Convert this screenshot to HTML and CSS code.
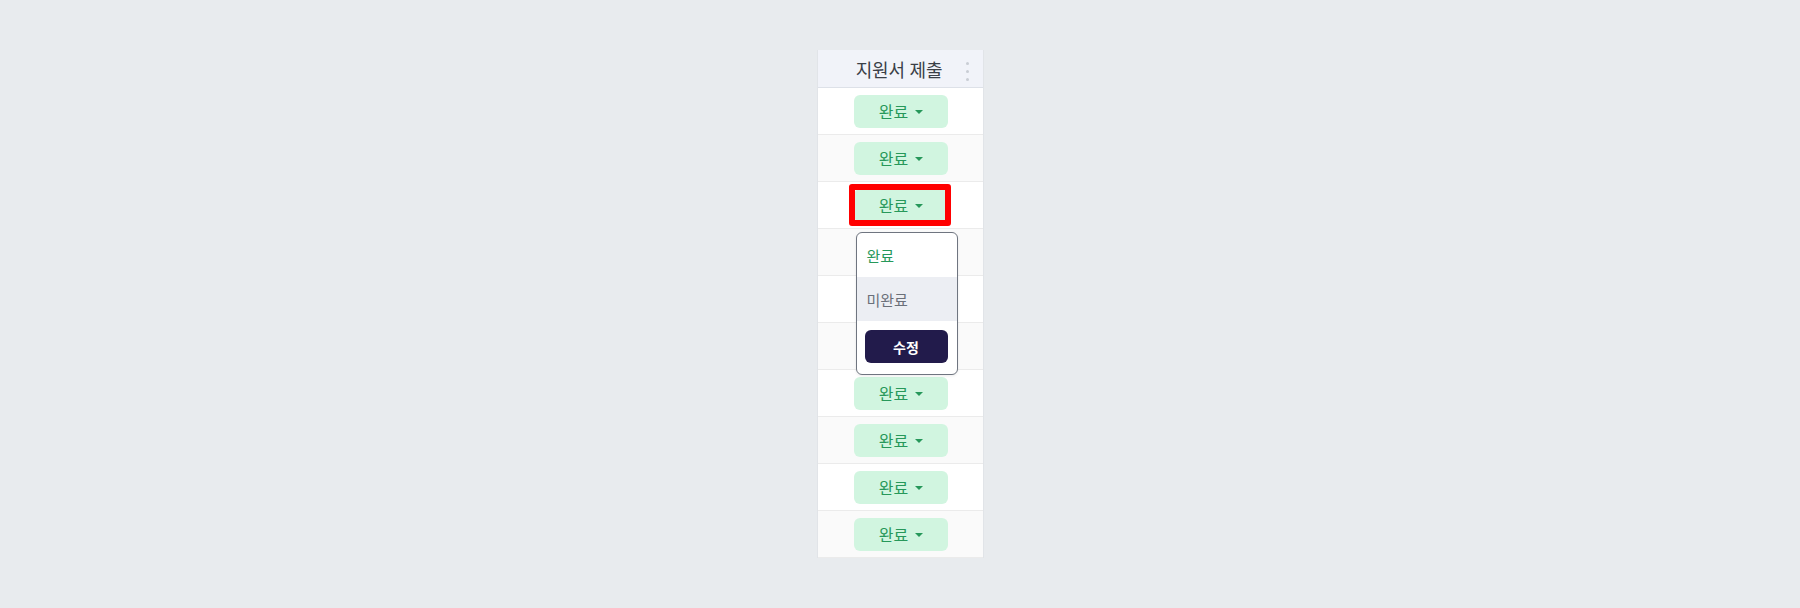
FILE: index.html
```html
<!DOCTYPE html>
<html lang="ko">
<head>
<meta charset="utf-8">
<title>지원서 제출</title>
<link rel="stylesheet" href="styles.css">
</head>
<body>
<div class="table">
  <div class="head">
    <span class="head-title">지원서 제출</span>
    <span class="kebab"><i></i><i></i><i></i></span>
  </div>
  <div class="row"><button class="status">완료<span class="caret"></span></button></div>
  <div class="row alt"><button class="status">완료<span class="caret"></span></button></div>
  <div class="row active">
    <button class="status">완료<span class="caret"></span></button>
    <div class="highlight"></div>
    <div class="menu">
      <div class="menu-item selected">완료</div>
      <div class="menu-item hover">미완료</div>
      <div class="menu-foot"><button class="save">수정</button></div>
    </div>
  </div>
  <div class="row alt"></div>
  <div class="row"></div>
  <div class="row alt"></div>
  <div class="row"><button class="status">완료<span class="caret"></span></button></div>
  <div class="row alt"><button class="status">완료<span class="caret"></span></button></div>
  <div class="row"><button class="status">완료<span class="caret"></span></button></div>
  <div class="row alt"><button class="status">완료<span class="caret"></span></button></div>
</div>
</body>
</html>
```
FILE: styles.css
```css
* { box-sizing: border-box; }
html, body { height: 100%; }
body {
  margin: 0;
  background: #e8ebee;
  font-family: "Noto Sans CJK KR", "Noto Sans", sans-serif;
  display: flex;
  justify-content: center;
  align-items: flex-start;
  padding-top: 50px;
}
.table {
  width: 167px;
  background: #ffffff;
  border-left: 1px solid #e1e4e8;
  border-right: 1px solid #e1e4e8;
}
.head {
  position: relative;
  height: 38px;
  background: #f1f3f9;
  border-bottom: 1px solid #dde1e8;
  display: flex;
  align-items: center;
  justify-content: center;
}
.head-title {
  font-size: 18px;
  color: #3a3f47;
  letter-spacing: -0.2px;
  margin-left: -2px;
}
.kebab {
  position: absolute;
  right: 14px;
  top: 12px;
  display: flex;
  flex-direction: column;
  gap: 5px;
}
.kebab i {
  display: block;
  width: 3px;
  height: 3px;
  border-radius: 50%;
  background: #c9cdd4;
}
.row {
  position: relative;
  height: 47px;
  border-bottom: 1px solid #ebebeb;
  display: flex;
  align-items: center;
  justify-content: center;
  background: #ffffff;
}
.row.alt { background: #fafafa; }
.status {
  width: 94px;
  height: 33px;
  margin-left: 2px;
  border: none;
  border-radius: 6px;
  background: #d1f5e0;
  color: #27985a;
  font-family: inherit;
  font-size: 16px;
  display: flex;
  align-items: center;
  justify-content: center;
  gap: 7px;
  padding: 0;
}
.caret {
  width: 0;
  height: 0;
  border-left: 4px solid transparent;
  border-right: 4px solid transparent;
  border-top: 4px solid #27985a;
  margin-top: 1px;
}
.highlight {
  position: absolute;
  left: 31px;
  top: 2px;
  width: 102px;
  height: 42px;
  border: 6px solid #ff0000;
  border-radius: 3px;
  pointer-events: none;
}
.menu {
  position: absolute;
  left: 38px;
  top: 50px;
  width: 102px;
  background: #ffffff;
  border: 1px solid #6f7580;
  border-radius: 6px;
  overflow: hidden;
  z-index: 5;
  box-shadow: 0 1px 3px rgba(0,0,0,0.08);
}
.menu-item {
  height: 44px;
  display: flex;
  align-items: center;
  padding-left: 10px;
  font-size: 15px;
}
.menu-item.selected { color: #27985a; }
.menu-item.hover { background: #eceef3; color: #6b7079; }
.menu-foot {
  padding: 9px 9px 11px 8px;
}
.save {
  display: block;
  width: 83px;
  height: 33px;
  border: none;
  border-radius: 6px;
  background: #221b4b;
  color: #ffffff;
  font-family: inherit;
  font-size: 14px;
  font-weight: 700;
  padding: 0;
}
```
